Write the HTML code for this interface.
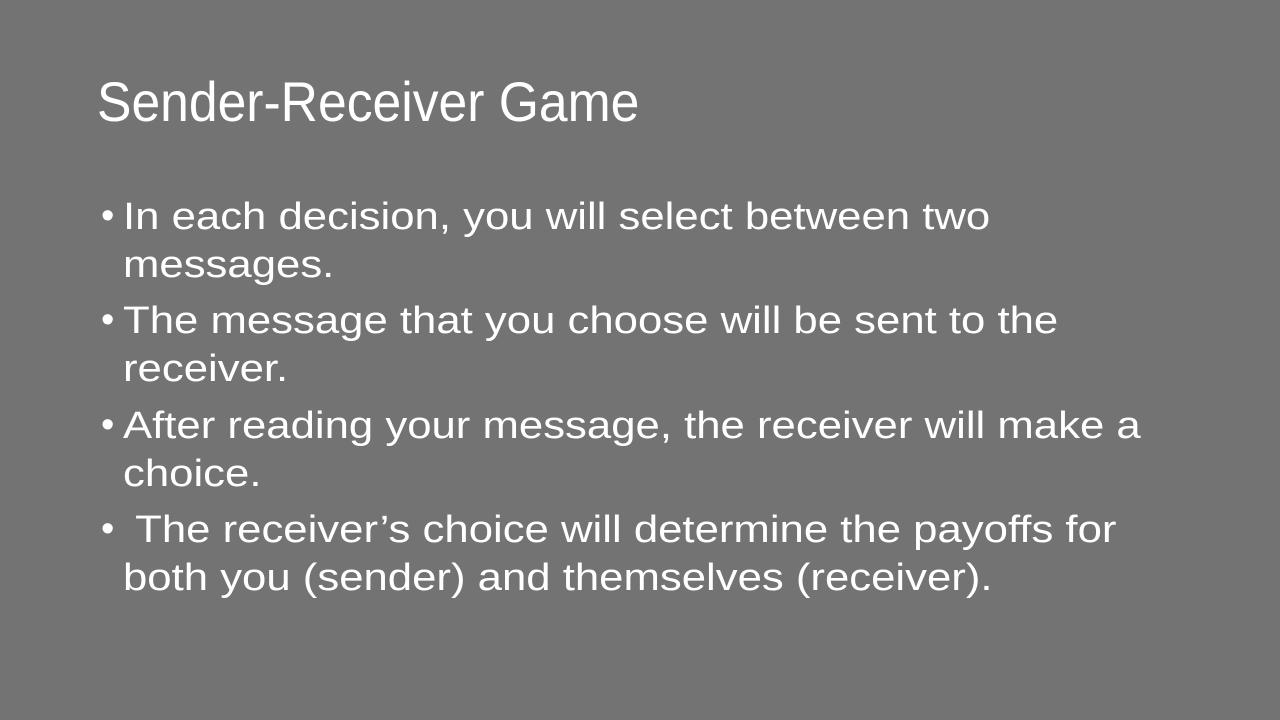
<!DOCTYPE html>
<html><head><meta charset="utf-8"><style>
html,body{margin:0;padding:0}
body{width:1280px;height:720px;background:#737373;position:relative;overflow:hidden;font-family:"Liberation Sans",sans-serif;color:#fff}
.l{position:absolute;white-space:nowrap;transform-origin:0 0;}
.t{font-size:56px;line-height:70px;left:97px;top:67px;transform:scaleX(0.922)}
.b{font-size:38px;line-height:48px;left:123px;transform:scaleX(1.15)}
.d{position:absolute;font-size:38px;line-height:48px;left:101px}
</style></head><body>
<div class="l t">Sender-Receiver Game</div>
<div class="d" style="top:192px">•</div>
<div class="l b" style="top:193px">In each decision, you will select between two</div>
<div class="l b" style="top:241px">messages.</div>
<div class="d" style="top:296px">•</div>
<div class="l b" style="top:297px">The message that you choose will be sent to the</div>
<div class="l b" style="top:345px">receiver.</div>
<div class="d" style="top:401px">•</div>
<div class="l b" style="top:402px">After reading your message, the receiver will make a</div>
<div class="l b" style="top:450px">choice.</div>
<div class="d" style="top:505px">•</div>
<div class="l b" style="top:506px">&nbsp;The receiver’s choice will determine the payoffs for</div>
<div class="l b" style="top:554px">both you (sender) and themselves (receiver).</div>
</body></html>
